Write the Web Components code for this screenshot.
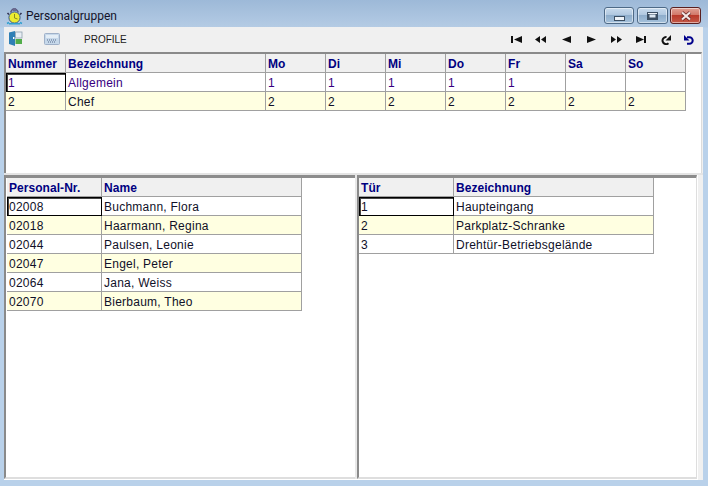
<!DOCTYPE html>
<html><head><meta charset="utf-8"><title>Personalgruppen</title>
<style>html,body{margin:0;padding:0;width:708px;height:486px;overflow:hidden;background:#b9d1ea}</style>
</head><body>
<x-window>
  <x-titlebar slot="title">Personalgruppen</x-titlebar>
  <x-toolbar slot="toolbar">PROFILE</x-toolbar>
  <x-grid slot="top" cols="60,200,60,60,60,60,60,60,60" head="Nummer|Bezeichnung|Mo|Di|Mi|Do|Fr|Sa|So" rows="1|Allgemein|1|1|1|1|1||;2|Chef|2|2|2|2|2|2|2" tone="#380080"></x-grid>
  <x-grid slot="left" cols="95,200" head="Personal-Nr.|Name" rows="02008|Buchmann, Flora;02018|Haarmann, Regina;02044|Paulsen, Leonie;02047|Engel, Peter;02064|Jana, Weiss;02070|Bierbaum, Theo"></x-grid>
  <x-grid slot="right" cols="95,200" head="Tür|Bezeichnung" rows="1|Haupteingang;2|Parkplatz-Schranke;3|Drehtür-Betriebsgelände"></x-grid>
</x-window>
<script>
class XWindow extends HTMLElement{constructor(){super();this.attachShadow({mode:'open'}).innerHTML=`<style>
:host{display:flex;flex-direction:column;width:708px;height:486px;background:linear-gradient(#9db9d8 0,#b4cbe4 27px,#b9d1ea 28px);box-sizing:border-box;padding:0 5px 6px 4px}
.client{flex:1;display:flex;flex-direction:column;background:#f0f0f0;min-height:0}
.panes{flex:1;display:flex;flex-direction:column;min-height:0}
.top{height:119px;flex:none;box-sizing:content-box;background:#fff;border-top:2px solid #8a8a8a;border-left:2px solid #8a8a8a;border-right:1px solid #dcdcdc;margin-right:1px;width:695px}
.hsplit{height:2px;flex:none;background:#e4e4e4}
.bottom{flex:1;display:flex;min-height:0;margin-right:5px;background:#fff;padding:0 1px 1px 0}
.left,.right{background:#fff;border-top:3px solid #8c8c8c;border-left:2px solid #8a8a8a;box-sizing:border-box;border-bottom:2px solid #dedede}
.left{width:351px;flex:none;padding-left:1px}
.vsplit{width:2px;background:#e8e8e8;flex:none}
.right{flex:1;border-right:1px solid #dedede}
</style><slot name="title"></slot><div class="client"><slot name="toolbar"></slot><div class="panes"><div class="top"><slot name="top"></slot></div><div class="hsplit"></div><div class="bottom"><div class="left"><slot name="left"></slot></div><div class="vsplit"></div><div class="right"><slot name="right"></slot></div></div></div></div>`}}
class XTitlebar extends HTMLElement{constructor(){super();this.attachShadow({mode:'open'}).innerHTML=`<style>
:host{display:flex;align-items:flex-start;height:27px;margin:0 -5px 0 -4px;padding:0 7px 0 6px;box-sizing:border-box;font:12px Roboto,"Noto Sans",sans-serif;color:#14142a}
.ic{width:17px;height:18px;margin:7px 3px 0 0;flex:none}
.t{flex:1;line-height:14px;padding-top:9px}
.btns{display:flex;margin-top:7px}
.b{height:17px;width:31px;box-sizing:border-box;border:1px solid #4e6a87;border-radius:3px;background:linear-gradient(#c9dbed 0,#b0c8e0 45%,#8eadcb 50%,#a6c2dc 100%);box-shadow:inset 0 0 0 1px rgba(255,255,255,.5);display:flex;align-items:center;justify-content:center;margin-left:2px}
.m{width:30px;margin-left:0}
.mx{margin-left:3px}
.x{border-color:#5a2020;background:linear-gradient(#e0a195 0,#d2796a 45%,#b93a2b 50%,#c45a48 100%)}
</style>
<svg class="ic" viewBox="0 0 17 18"><path d="M4.5 5.5Q8 -2 12.5 5.5" fill="none" stroke="#5a5a80" stroke-width="1.4"/><rect x="7" y="1" width="3" height="3" fill="#6a6a90"/><path d="M3 7.5L1.5 6M14 7.5L15.5 6" stroke="#303050" stroke-width="1.6"/><circle cx="8.5" cy="10.5" r="5.6" fill="#ecec30" stroke="#3a5a88"/><path d="M8.5 7v4l3 1" stroke="#8a8a20" fill="none"/><path d="M1 16.5l2-1M16 16.5l-2-1M3 16.8h11" stroke="#30a0d0" stroke-width="1.4"/></svg>
<div class="t"><slot></slot></div>
<div class="btns">
<div class="b m"><svg width="11" height="5" viewBox="0 0 11 5" style="margin-top:5px"><rect x=".5" y=".5" width="10" height="4" fill="#eef3f8" stroke="#3c4f63"/></svg></div>
<div class="b mx"><svg width="11" height="8" viewBox="0 0 11 8"><rect x=".5" y=".5" width="10" height="7" fill="#3c4f63" stroke="#3c4f63"/><rect x="2.5" y="2.5" width="6" height="3" fill="#dde8f2"/><rect x="1" y="1" width="9" height="1" fill="#eef3f8"/></svg></div>
<div class="b x"><svg width="12" height="10" viewBox="0 0 12 10"><path d="M2 1.5l8 7M10 1.5l-8 7" stroke="#5a2020" stroke-width="3.6"/><path d="M2 1.5l8 7M10 1.5l-8 7" stroke="#f4e8e6" stroke-width="2.2"/></svg></div>
</div>`}}
class XToolbar extends HTMLElement{constructor(){super();const tri=(w,d)=>`<svg class="n" width="${w}" height="7" viewBox="0 0 ${w} 7"><path d="${d}" fill="#111"/></svg>`;const sp=w=>`<span style="width:${w}px"></span>`;this.attachShadow({mode:'open'}).innerHTML=`<style>
:host{display:flex;align-items:center;height:25px;background:#f0f0f0;box-sizing:border-box;font:10px "Liberation Sans",sans-serif;color:#202020;padding-right:9px}
.door{margin:0 0 2px 5px;flex:none}.kb{margin:0 0 2px 21px;flex:none}
.lbl{margin-left:24px;flex:1;font-size:10px}
.nav{display:flex;align-items:center}
.n{flex:none;display:block}
</style>
<svg class="door" width="14" height="15" viewBox="0 0 14 15"><rect x="6.5" y="1" width="6.5" height="6" fill="#e8eef4" stroke="#8ea0b0" stroke-width=".8"/><rect x="6.5" y="8" width="6.5" height="5" fill="#52ad4a"/><path d="M0 1.5L6 0v15L0 13z" fill="#2f7fb5"/><rect x="4" y="6" width="1.4" height="2" fill="#fff"/></svg>
<svg class="kb" width="16" height="12" viewBox="0 0 16 12"><rect x=".5" y=".5" width="15" height="11" rx="1" fill="#c6d8ea" stroke="#9fb0c8"/><rect x="2" y="2" width="12" height="3" fill="#e3edf6"/><path d="M3 7h10M4 9h8" stroke="#54688a" stroke-dasharray="1 1"/></svg>
<div class="lbl"><slot></slot></div>
<div class="nav">
${tri(11,'M0 0h2v7H0zM11 0v7L3 3.5z')}${sp(13)}
${tri(11,'M0 3.5L5 0v7zM6 3.5L11 0v7z')}${sp(16)}
${tri(9,'M0 3.5L9 0v7z')}${sp(16)}
${tri(9,'M0 0l9 3.5L0 7z')}${sp(15)}
${tri(11,'M0 0l5 3.5L0 7zM6 0l5 3.5L6 7z')}${sp(14)}
${tri(10,'M0 0l8 3.5L0 7zM8 0h2v7H8z')}${sp(14)}
<svg width="11" height="10" viewBox="0 0 11 10"><path d="M6.5 2A3.6 3.6 0 1 0 8.5 8.3" fill="none" stroke="#111" stroke-width="2"/><path d="M11 0v5.5H5.5z" fill="#111"/></svg>${sp(13)}
<svg width="10" height="10" viewBox="0 0 10 10"><path d="M3 2.2h2.4a3.3 3.3 0 0 1 0 6.6H3" fill="none" stroke="#00008b" stroke-width="2"/><path d="M0 0v5.5h5.5z" fill="#00008b"/></svg>
</div>`}}
class XGrid extends HTMLElement{connectedCallback(){if(this.shadowRoot)return;
const cols=this.getAttribute('cols').split(',').map(Number);
const tone=this.getAttribute('tone');
const head=this.getAttribute('head').split('|');
const rows=this.getAttribute('rows').split(';').map(r=>r.split('|'));
const s=this.attachShadow({mode:'open'});
const w=cols.reduce((a,b)=>a+b,0);
let h=head.map(t=>`<div class="c h">${t}</div>`).join('');
rows.forEach((r,i)=>{r.forEach((t,j)=>{const sel=i==0&&j==0?' sel':'';const alt=i%2?' alt':'';const st=tone&&i==0?` style="color:${tone}"`:'';h+=`<div class="c${alt}${sel}"${st}>${t}</div>`})});
s.innerHTML=`<style>
:host{display:block}
.g{display:grid;grid-template-columns:${cols.map(c=>c+'px').join(' ')};grid-auto-rows:19px;width:${w}px;font:12px "Liberation Sans",sans-serif;color:#101028;letter-spacing:.25px}
.c{box-sizing:border-box;border-right:1px solid #a0a0a0;border-bottom:1px solid #a0a0a0;padding:1px 0 0 2px;line-height:18px;white-space:nowrap;overflow:hidden;background:#fff}
.h{background:#f0f0f0;font-weight:bold;color:#000080;letter-spacing:.05px}
.alt{background:#ffffe1}
.sel{box-shadow:inset 1px 1px 0 #444;border:1px solid #000;padding:1px 0 0 1px;line-height:16px}
</style><div class="g">${h}</div>`}}
customElements.define('x-window',XWindow);
customElements.define('x-titlebar',XTitlebar);
customElements.define('x-toolbar',XToolbar);
customElements.define('x-grid',XGrid);
</script>
</body></html>
